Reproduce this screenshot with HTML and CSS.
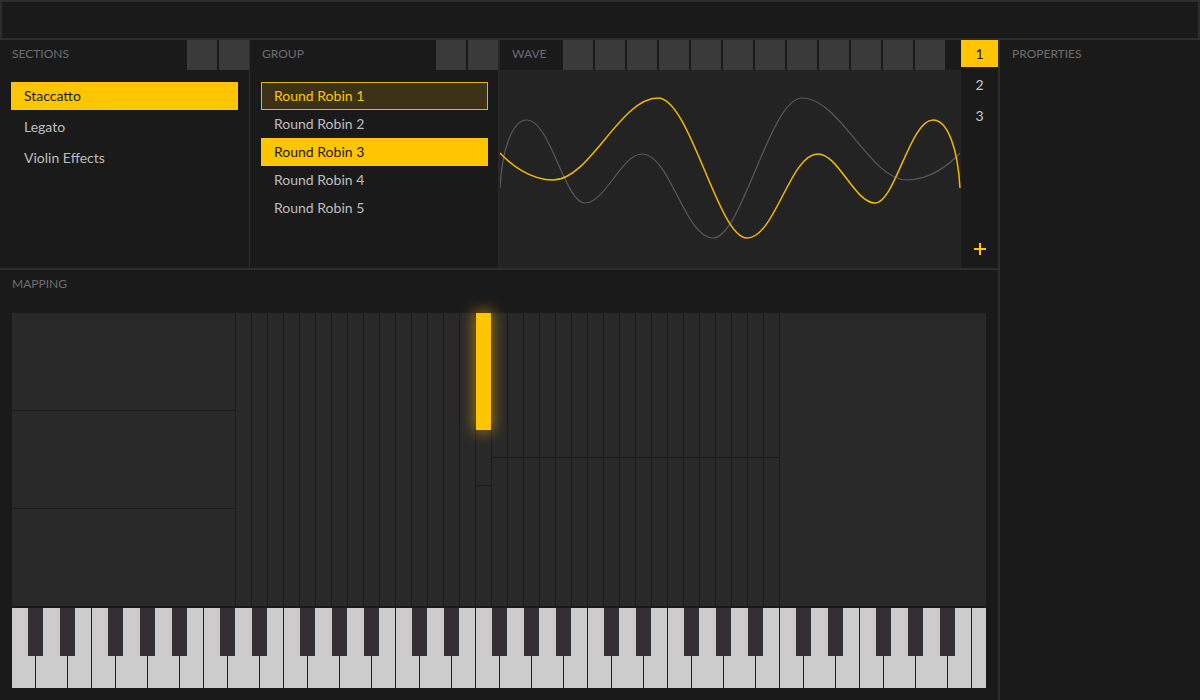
FILE: index.html
```html
<!DOCTYPE html>
<html>
<head>
<meta charset="utf-8">
<link rel="stylesheet" href="styles.css">
</head>
<body>
<div class="app">
  <div class="topbar"></div>
  <div class="main">
    <div class="workspace">
      <div class="upper">
        <section class="panel sections">
          <div class="phead"><span class="plabel">SECTIONS</span><span class="sq"></span><span class="sq"></span></div>
          <ul class="list">
            <li class="item active">Staccatto</li>
            <li class="item">Legato</li>
            <li class="item">Violin Effects</li>
          </ul>
        </section>
        <section class="panel group">
          <div class="phead"><span class="plabel">GROUP</span><span class="sq"></span><span class="sq"></span></div>
          <ul class="list">
            <li class="item current">Round Robin 1</li>
            <li class="item">Round Robin 2</li>
            <li class="item active">Round Robin 3</li>
            <li class="item">Round Robin 4</li>
            <li class="item">Round Robin 5</li>
          </ul>
        </section>
        <section class="wave">
          <div class="phead"><span class="plabel wlabel">WAVE</span><span class="sq"></span><span class="sq"></span><span class="sq"></span><span class="sq"></span><span class="sq"></span><span class="sq"></span><span class="sq"></span><span class="sq"></span><span class="sq"></span><span class="sq"></span><span class="sq"></span><span class="sq"></span></div>
          <div class="wave-area">
            <svg class="wave-svg" width="461" height="198" viewBox="500 70 461 198">
              <path class="w-gray" transform="translate(1460 0) scale(-1 1)" d="M500,153 C510,164 530,180 553,180 C590,180 620,98 658,98 C690,98 718,238 747,238 C775,238 790,154 818,154 C838,154 855,203 875,203 C895,203 910,120 933,120 C948,120 958,150 960,188"/>
              <path class="w-yellow" d="M500,153 C510,164 530,180 553,180 C590,180 620,98 658,98 C690,98 718,238 747,238 C775,238 790,154 818,154 C838,154 855,203 875,203 C895,203 910,120 933,120 C948,120 958,150 960,188"/>
            </svg>
          </div>
        </section>
        <div class="numcol">
          <div class="num on">1</div>
          <div class="num">2</div>
          <div class="num">3</div>
          <svg class="add" width="12" height="12" viewBox="0 0 12 12"><path d="M6 0V12M0 6H12"/></svg>
        </div>
      </div>
      <section class="mapping">
        <div class="plabel mlabel">MAPPING</div>
        <div class="zones">
          <div class="zone-left">
            <div class="zrow"></div>
            <div class="zrow"></div>
            <div class="zrow"></div>
          </div>
          <div class="col"></div><div class="col"></div><div class="col"></div><div class="col"></div><div class="col"></div>
          <div class="col"></div><div class="col"></div><div class="col"></div><div class="col"></div><div class="col"></div>
          <div class="col"></div><div class="col"></div><div class="col"></div><div class="col"></div><div class="col"></div>
          <div class="col"><div class="bar"></div><div class="cell hitcell"></div></div>
          <div class="col"><div class="cell split"></div></div><div class="col"><div class="cell split"></div></div><div class="col"><div class="cell split"></div></div>
          <div class="col"><div class="cell split"></div></div><div class="col"><div class="cell split"></div></div><div class="col"><div class="cell split"></div></div>
          <div class="col"><div class="cell split"></div></div><div class="col"><div class="cell split"></div></div><div class="col"><div class="cell split"></div></div>
          <div class="col"><div class="cell split"></div></div><div class="col"><div class="cell split"></div></div><div class="col"><div class="cell split"></div></div>
          <div class="col"><div class="cell split"></div></div><div class="col"><div class="cell split"></div></div><div class="col"><div class="cell split"></div></div>
          <div class="col"><div class="cell split"></div></div><div class="col"><div class="cell split"></div></div><div class="col"><div class="cell split"></div></div>
          <div class="zone-right"></div>
        </div>
        <div class="keys">
          <div class="whites">
            <div class="wk"></div><div class="wk wide"></div><div class="wk"></div><div class="wk"></div><div class="wk wide"></div><div class="wk wide"></div><div class="wk"></div>
            <div class="wk"></div><div class="wk wide"></div><div class="wk"></div><div class="wk"></div><div class="wk wide"></div><div class="wk wide"></div><div class="wk"></div>
            <div class="wk"></div><div class="wk wide"></div><div class="wk"></div><div class="wk"></div><div class="wk wide"></div><div class="wk wide"></div><div class="wk"></div>
            <div class="wk"></div><div class="wk wide"></div><div class="wk"></div><div class="wk"></div><div class="wk wide"></div><div class="wk wide"></div><div class="wk"></div>
            <div class="wk"></div><div class="wk wide"></div><div class="wk"></div><div class="wk"></div><div class="wk wide"></div><div class="wk wide"></div><div class="wk"></div>
            <div class="wk last"></div>
          </div>
          <div class="blacks">
            <div class="bk first"></div><div class="bk"></div><div class="bk g"></div><div class="bk"></div><div class="bk"></div>
            <div class="bk g"></div><div class="bk"></div><div class="bk g"></div><div class="bk"></div><div class="bk"></div>
            <div class="bk g"></div><div class="bk"></div><div class="bk g"></div><div class="bk"></div><div class="bk"></div>
            <div class="bk g"></div><div class="bk"></div><div class="bk g"></div><div class="bk"></div><div class="bk"></div>
            <div class="bk g"></div><div class="bk"></div><div class="bk g"></div><div class="bk"></div><div class="bk"></div>
          </div>
        </div>
      </section>
    </div>
    <aside class="props">
      <div class="phead"><span class="plabel">PROPERTIES</span></div>
    </aside>
  </div>
</div>
</body>
</html>
```

FILE: styles.css
```css
body {
  margin: 0;
  background: #1b1a1b;
  font-family: Lato, "Open Sans", "Liberation Sans", sans-serif;
}

.app {
  width: 1200px;
  height: 700px;
  overflow: hidden;
  display: flex;
  flex-direction: column;
}

.topbar {
  height: 40px;
  flex: none;
  box-sizing: border-box;
  border: 2px solid #2e2d2e;
}

.main {
  display: flex;
  height: 660px;
}

.workspace {
  width: 998px;
  flex: none;
  display: flex;
  flex-direction: column;
}

.upper {
  height: 228px;
  flex: none;
  display: flex;
}

.panel {
  box-sizing: border-box;
  flex: none;
}

.sections {
  width: 250px;
  border-right: 1px solid #2e2d2e;
}

.group {
  width: 250px;
  border-right: 2px solid #282728;
}

.phead {
  display: flex;
  height: 30px;
  gap: 2px;
}

.plabel {
  flex: 1;
  padding-left: 12px;
  font-size: 12px;
  line-height: 28px;
  color: #6e6d6e;
}

.sq {
  width: 30px;
  flex: none;
  background: #3b3a3b;
}

.list {
  list-style: none;
  margin: 0;
  padding: 12px 11px 0 11px;
  display: flex;
  flex-direction: column;
}

.sections .list {
  gap: 3px;
}

.group .list {
  padding-right: 10px;
}

.item {
  height: 28px;
  box-sizing: border-box;
  border: 1px solid transparent;
  padding-left: 12px;
  line-height: 26px;
  font-size: 14px;
  color: #bdbdbd;
}

.item.active {
  background: #ffc600;
  border-color: #ffc600;
  color: #1b1a1b;
}

.item.current {
  background: #3d3218;
  border-color: #e6b300;
  color: #ffc600;
}

.wave {
  width: 461px;
  flex: none;
  display: flex;
  flex-direction: column;
}

.wlabel {
  flex: none;
  width: 61px;
  box-sizing: border-box;
}

.wave-area {
  flex: 1;
  background: #242324;
}

.wave-svg {
  display: block;
}

.w-yellow {
  fill: none;
  stroke: #f2b900;
  stroke-width: 1.5;
}

.w-gray {
  fill: none;
  stroke: #5a595a;
  stroke-width: 1.2;
}

.numcol {
  width: 37px;
  flex: none;
  display: flex;
  flex-direction: column;
  gap: 4px;
}

.num {
  height: 27px;
  line-height: 27px;
  text-align: center;
  font-size: 14px;
  color: #c8c8c8;
}

.num.on {
  background: #ffc600;
  color: #1b1a1b;
}

.add {
  margin-top: auto;
  margin-bottom: 13px;
  align-self: center;
}

.add path {
  stroke: #ffc600;
  stroke-width: 2;
}

.mapping {
  flex: 1;
  border-top: 2px solid #2e2d2e;
  padding: 0 12px;
}

.mlabel {
  padding-left: 0;
  height: 30px;
}

.zones {
  display: flex;
  height: 293px;
  margin-top: 13px;
  background: #2a292a;
}

.zone-left {
  width: 224px;
  flex: none;
  box-sizing: border-box;
  border-right: 1px solid #1c1b1c;
  display: flex;
  flex-direction: column;
}

.zrow {
  height: 98px;
  flex: none;
  box-sizing: border-box;
  border-bottom: 1px solid #1c1b1c;
}

.zrow:last-child {
  flex: 1;
  border-bottom: 0;
}

.col {
  width: 16px;
  flex: none;
  box-sizing: border-box;
  border-right: 1px solid #1c1b1c;
  display: flex;
  flex-direction: column;
}

.cell {
  flex: none;
  box-sizing: border-box;
  border-bottom: 1px solid #1c1b1c;
}

.split {
  height: 145px;
}

.hitcell {
  height: 56px;
}

.bar {
  height: 117px;
  flex: none;
  background: #ffc600;
  box-shadow: 0 0 14px 2px rgba(255, 198, 0, 0.5);
  position: relative;
  z-index: 1;
}

.zone-right {
  flex: 1;
}

.keys {
  display: grid;
  margin-top: 2px;
  height: 80px;
}

.whites,
.blacks {
  grid-area: 1 / 1;
  display: flex;
}

.blacks {
  align-items: flex-start;
}

.wk {
  width: 24px;
  height: 80px;
  flex: none;
  box-sizing: border-box;
  border-right: 1px solid #1e1d1e;
  background: #cccccc;
}

.wk.wide {
  width: 32px;
}

.wk.last {
  width: 14px;
  border-right: 0;
}

.bk {
  width: 15px;
  height: 48px;
  flex: none;
  margin-left: 17px;
  background: #322e32;
}

.bk.first {
  margin-left: 16px;
}

.bk.g {
  margin-left: 33px;
}

.props {
  flex: 1;
  border-left: 2px solid #2e2d2e;
}
```
